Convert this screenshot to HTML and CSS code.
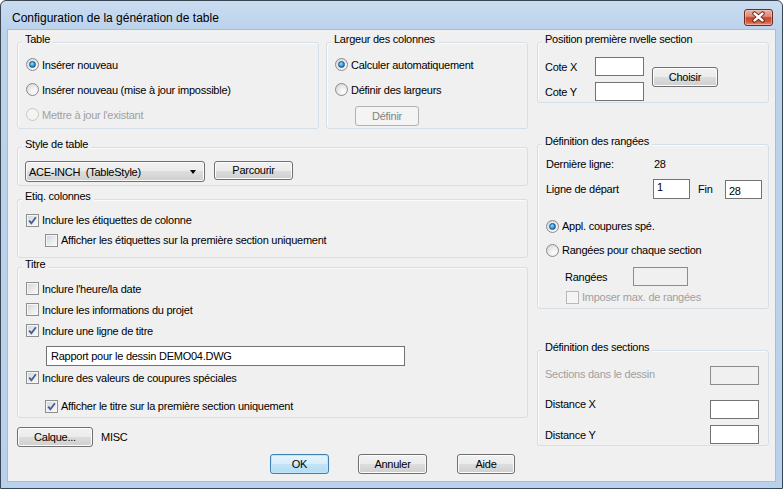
FILE: index.html
```html
<!DOCTYPE html>
<html lang="fr">
<head>
<meta charset="utf-8">
<title>Configuration de la génération de table</title>
<link rel="stylesheet" href="styles.css">
</head>
<body>
<div class="window">
  <div class="titlebar">
    <span class="title">Configuration de la génération de table</span>
    <div class="close">
      <svg width="27" height="15" viewBox="0 0 27 15">
        <path d="M9.5 3.5 L17.5 10.5 M17.5 3.5 L9.5 10.5" stroke="#5a1a10" stroke-width="4.2" stroke-linecap="round" fill="none"/>
        <path d="M9.5 3.5 L17.5 10.5 M17.5 3.5 L9.5 10.5" stroke="#ffffff" stroke-width="2.4" stroke-linecap="round" fill="none"/>
      </svg>
    </div>
  </div>
  <div class="client">
    <div class="main">
      <div class="left">
        <div class="row-top">
          <div class="group g-table">
            <span class="legend">Table</span>
            <div class="opt r25"><span class="radio on"></span><span>Insérer nouveau</span></div>
            <div class="opt r25"><span class="radio"></span><span>Insérer nouveau (mise à jour impossible)</span></div>
            <div class="opt r25 disabled"><span class="radio dis"></span><span>Mettre à jour l'existant</span></div>
          </div>
          <div class="group g-largeur">
            <span class="legend">Largeur des colonnes</span>
            <div class="opt r25"><span class="radio on"></span><span>Calculer automatiquement</span></div>
            <div class="opt r25"><span class="radio"></span><span>Définir des largeurs</span></div>
            <div class="btn btn-dis b-definir">Définir</div>
          </div>
        </div>
        <div class="group g-style">
          <span class="legend">Style de table</span>
          <div class="combo"><span class="combo-text">ACE-INCH  (TableStyle)</span><span class="arrow"></span></div>
          <div class="btn b-parcourir">Parcourir</div>
        </div>
        <div class="group g-etiq">
          <span class="legend">Etiq. colonnes</span>
          <div class="opt r20"><span class="check"><svg class="tick" viewBox="0 0 11 11"><path d="M2.2 5.6 L4.4 8.2 L8.9 2.2" stroke="#4b5f97" stroke-width="1.9" fill="none"/></svg></span><span>Inclure les étiquettes de colonne</span></div>
          <div class="opt r20 indent"><span class="check"></span><span>Afficher les étiquettes sur la première section uniquement</span></div>
        </div>
        <div class="group g-titre">
          <span class="legend">Titre</span>
          <div class="opt r21"><span class="check"></span><span>Inclure l'heure/la date</span></div>
          <div class="opt r21"><span class="check"></span><span>Inclure les informations du projet</span></div>
          <div class="opt r21"><span class="check"><svg class="tick" viewBox="0 0 11 11"><path d="M2.2 5.6 L4.4 8.2 L8.9 2.2" stroke="#4b5f97" stroke-width="1.9" fill="none"/></svg></span><span>Inclure une ligne de titre</span></div>
          <div class="field f-titre">Rapport pour le dessin DEMO04.DWG</div>
          <div class="opt r21 after-field"><span class="check"><svg class="tick" viewBox="0 0 11 11"><path d="M2.2 5.6 L4.4 8.2 L8.9 2.2" stroke="#4b5f97" stroke-width="1.9" fill="none"/></svg></span><span>Inclure des valeurs de coupures spéciales</span></div>
          <div class="opt r20 indent sub"><span class="check"><svg class="tick" viewBox="0 0 11 11"><path d="M2.2 5.6 L4.4 8.2 L8.9 2.2" stroke="#4b5f97" stroke-width="1.9" fill="none"/></svg></span><span>Afficher le titre sur la première section uniquement</span></div>
        </div>
        <div class="calque-row">
          <div class="btn b-calque">Calque...</div>
          <span class="misc">MISC</span>
        </div>
      </div>
      <div class="right">
        <div class="group g-position">
          <span class="legend">Position première nvelle section</span>
          <div class="pos-grid">
            <span class="lbl">Cote X</span><div class="field f-cote"></div>
            <span class="lbl">Cote Y</span><div class="field f-cote"></div>
          </div>
          <div class="btn b-choisir">Choisir</div>
        </div>
        <div class="group g-rangees">
          <span class="legend">Définition des rangées</span>
          <div class="line l-derniere"><span class="w108">Dernière ligne:</span><span>28</span></div>
          <div class="line l-depart">
            <span class="w107">Ligne de départ</span>
            <div class="field f-num f-un">1</div>
            <span class="fin">Fin</span>
            <div class="field f-num f-fin">28</div>
          </div>
          <div class="opt r24 first-radio"><span class="radio on"></span><span>Appl. coupures spé.</span></div>
          <div class="opt r24"><span class="radio"></span><span>Rangées pour chaque section</span></div>
          <div class="line l-rangees"><span class="w68">Rangées</span><div class="field field-dis f-rang"></div></div>
          <div class="opt l-imposer disabled"><span class="check dis"></span><span>Imposer max. de rangées</span></div>
        </div>
        <div class="group g-sections">
          <span class="legend">Définition des sections</span>
          <div class="sline s1"><span class="disabled s-lbl1">Sections dans le dessin</span><div class="field field-dis f-sec"></div></div>
          <div class="sline s2"><span class="s-lbl2">Distance X</span><div class="field f-sec"></div></div>
          <div class="sline s3"><span class="s-lbl3">Distance Y</span><div class="field f-sec"></div></div>
        </div>
      </div>
    </div>
    <div class="actions">
      <div class="btn btn-default b-ok">OK</div>
      <div class="btn b-annuler">Annuler</div>
      <div class="btn b-aide">Aide</div>
    </div>
  </div>
</div>
</body>
</html>
```

FILE: styles.css
```css
html, body {
  margin: 0;
  padding: 0;
  background: #ffffff;
}
body {
  font-family: "Liberation Sans", Arial, sans-serif;
  font-size: 11px;
  letter-spacing: -0.25px;
  color: #000;
}
.window {
  width: 783px;
  height: 489px;
  box-sizing: border-box;
  border: 1px solid #3a4654;
  border-radius: 6px 6px 0 0;
  background: linear-gradient(#cadcf0 0px, #bcd3ec 28px, #b9d1ea 100%);
  padding: 0 6px 6px 6px;
  display: flex;
  flex-direction: column;
}
.titlebar {
  height: 28px;
  display: flex;
  align-items: flex-start;
  flex: none;
}
.title {
  font-size: 12px;
  letter-spacing: 0;
  line-height: 14px;
  margin: 10px 0 0 5px;
  color: #000;
}
.close {
  margin: 8px 3px 0 auto;
  width: 29px;
  height: 17px;
  box-sizing: border-box;
  border: 1px solid #6e2a1f;
  border-radius: 3px;
  background: linear-gradient(#eab1a4 0%, #dd8b78 42%, #c8462f 52%, #cf5840 78%, #e29379 100%);
  box-shadow: inset 0 0 0 1px rgba(255, 220, 210, 0.45);
  display: flex;
  align-items: center;
  justify-content: center;
}
.close svg { display: block; }
.client {
  flex: 1;
  background: #f0f0f0;
  border: 1px solid #a7bdd6;
  display: flex;
  flex-direction: column;
}
.main {
  display: flex;
  gap: 9px;
  padding: 12px 0 0 9px;
}
.left { width: 511px; }
.right { width: 232px; }
.row-top {
  display: flex;
  gap: 7px;
}
.group {
  position: relative;
  box-sizing: border-box;
  border: 1px solid #d5dfe5;
  border-radius: 3px;
  box-shadow: inset 1px 1px 0 #fbfbfb;
}
.legend {
  position: absolute;
  top: -10px;
  left: 4px;
  padding: 0 3px;
  line-height: 13px;
  background: #f0f0f0;
  white-space: nowrap;
}
.opt {
  display: flex;
  align-items: center;
  gap: 3px;
  white-space: nowrap;
}
.r25 { height: 25px; }
.r24 { height: 24px; }
.r21 { height: 21px; }
.r20 { height: 20px; }
.disabled { color: #a0a0a0; }

/* radio */
.radio {
  width: 13px;
  height: 13px;
  flex: none;
  box-sizing: border-box;
  border-radius: 50%;
  border: 1px solid #8a8b8c;
  background: radial-gradient(circle at 65% 70%, #ffffff 0%, #f0f0f0 35%, #d2d2d2 100%);
  position: relative;
}
.radio.on::after {
  content: "";
  position: absolute;
  left: 2px;
  top: 2px;
  width: 7px;
  height: 7px;
  box-sizing: border-box;
  border-radius: 50%;
  border: 1px solid #1d4f7f;
  background: radial-gradient(circle at 40% 35%, #a4e6ff 0%, #35a3e6 45%, #15599b 100%);
}
.radio.dis {
  border-color: #c6c6c6;
  background: #f4f4f4;
}

/* checkbox */
.check {
  width: 13px;
  height: 13px;
  flex: none;
  box-sizing: border-box;
  border: 1px solid #8e8f8f;
  background: linear-gradient(135deg, #cfd1d4 0%, #e8e9ea 50%, #fbfbfb 100%);
  box-shadow: inset 0 0 0 1px #f6f6f6;
  position: relative;
}
.check.dis {
  border-color: #b8b8b8;
  background: #f4f4f4;
}
.tick {
  display: block;
  width: 11px;
  height: 11px;
}

/* buttons */
.btn {
  box-sizing: border-box;
  border: 1px solid #707070;
  border-radius: 3px;
  background: linear-gradient(#f2f2f2 0%, #ebebeb 50%, #dddddd 50%, #cfcfcf 100%);
  box-shadow: inset 0 0 0 1px #fcfcfc;
  display: flex;
  align-items: center;
  justify-content: center;
  height: 20px;
  flex: none;
  line-height: 13px;
}
.btn-dis {
  border-color: #adb2b5;
  background: #f4f4f4;
  box-shadow: none;
  color: #838383;
}
.btn-default {
  border-color: #3c7fb1;
  background: linear-gradient(#e6f4fc 0%, #d8eefb 50%, #c3e4f6 50%, #b4dcf3 100%);
  box-shadow: inset 0 0 0 1px #bfe6fb;
}

/* text fields */
.field {
  box-sizing: border-box;
  background: #ffffff;
  border: 1px solid #737373;
  flex: none;
}
.field-dis {
  background: #f0f0f0;
  border-color: #8c8c8c;
}

/* Table / Largeur */
.g-table, .g-largeur {
  height: 87px;
  padding: 9px 0 0 8px;
}
.g-table { width: 302px; }
.g-largeur { width: 202px; }
.b-definir {
  width: 64px;
  margin: 4px 0 0 20px;
}

/* Style */
.g-style {
  margin-top: 18px;
  height: 39px;
  padding: 13px 0 0 7px;
  display: flex;
  align-items: flex-start;
  gap: 9px;
}
.combo {
  width: 180px;
  height: 21px;
  box-sizing: border-box;
  border: 1px solid #707070;
  border-radius: 3px;
  background: linear-gradient(#f2f2f2 0%, #ebebeb 50%, #dddddd 50%, #cfcfcf 100%);
  box-shadow: inset 0 0 0 1px #fcfcfc;
  display: flex;
  align-items: center;
  padding-left: 3px;
}
.combo-text { white-space: pre; }
.arrow {
  margin: 1px 8px 0 auto;
  width: 0;
  height: 0;
  border-left: 3.5px solid transparent;
  border-right: 3.5px solid transparent;
  border-top: 4px solid #000;
}
.b-parcourir { width: 79px; height: 19px; }

/* Etiq */
.g-etiq {
  margin-top: 13px;
  height: 59px;
  padding: 10px 0 0 8px;
}
.indent { margin-left: 19px; }

/* Titre */
.g-titre {
  margin-top: 9px;
  height: 151px;
  padding: 10px 0 0 8px;
}
.f-titre {
  margin: 5px 0 0 20px;
  width: 359px;
  height: 20px;
  padding: 0 0 0 4px;
  display: flex;
  align-items: center;
  white-space: nowrap;
}
.after-field { margin-top: 1px; }
.sub { margin-top: 8px; }

/* bottom left */
.calque-row {
  margin-top: 9px;
  display: flex;
  align-items: center;
  gap: 8px;
}
.b-calque { width: 76px; }

/* Position */
.g-position {
  height: 61px;
  padding: 14px 0 0 7px;
  display: flex;
  align-items: flex-start;
}
.pos-grid {
  display: grid;
  grid-template-columns: 50px 49px;
  grid-template-rows: 19px 19px;
  row-gap: 6px;
  align-items: center;
}
.f-cote { width: 49px; height: 19px; }
.b-choisir {
  width: 66px;
  margin: 10px 0 0 8px;
}

/* Rangées */
.g-rangees {
  margin-top: 41px;
  height: 165px;
  padding: 9px 0 0 8px;
}
.line {
  display: flex;
  align-items: center;
  white-space: nowrap;
}
.l-derniere { height: 20px; }
.w108 { width: 108px; flex: none; }
.w107 { width: 107px; flex: none; }
.w68 { width: 68px; flex: none; }
.l-depart {
  margin-top: 5px;
  height: 20px;
  align-items: flex-start;
}
.l-depart .w107 { line-height: 20px; }
.f-num {
  width: 37px;
  padding: 1px 0 0 3px;
  line-height: 13px;
}
.f-un { height: 20px; }
.f-fin { height: 19px; margin-top: 1px; padding-top: 4px; }
.fin {
  width: 27px;
  margin-left: 8px;
  line-height: 20px;
  flex: none;
}
.first-radio { margin-top: 15px; }
.l-rangees {
  margin: 5px 0 0 19px;
  height: 19px;
}
.f-rang { width: 55px; height: 19px; }
.l-imposer {
  margin: 2px 0 0 20px;
  height: 18px;
}

/* Sections */
.g-sections {
  margin-top: 41px;
  height: 96px;
  padding: 0 9px 0 7px;
}
.sline {
  display: flex;
  align-items: flex-start;
  justify-content: space-between;
  height: 19px;
  white-space: nowrap;
  line-height: 13px;
}
.s1 { margin-top: 15px; }
.s2 { margin-top: 15px; }
.s3 { margin-top: 6px; }
.s-lbl1 { margin-top: 2px; }
.s-lbl2 { margin-top: -2px; }
.s-lbl3 { margin-top: 4px; }
.f-sec { width: 49px; height: 19px; }

/* actions */
.actions {
  display: flex;
  margin-top: 7px;
  padding-left: 262px;
}
.b-ok { width: 59px; }
.b-annuler { width: 69px; margin-left: 29px; }
.b-aide { width: 58px; margin-left: 30px; }
```
